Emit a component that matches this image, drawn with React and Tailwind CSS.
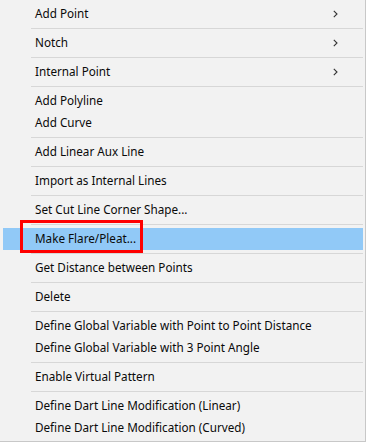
import React from 'react';

const groups = [
  [{ label: 'Add Point', sub: true }],
  [{ label: 'Notch', sub: true }],
  [{ label: 'Internal Point', sub: true }],
  [{ label: 'Add Polyline' }, { label: 'Add Curve' }],
  [{ label: 'Add Linear Aux Line' }],
  [{ label: 'Import as Internal Lines' }],
  [{ label: 'Set Cut Line Corner Shape...' }],
  [{ label: 'Make Flare/Pleat...', active: true }],
  [{ label: 'Get Distance between Points' }],
  [{ label: 'Delete' }],
  [
    { label: 'Define Global Variable with Point to Point Distance' },
    { label: 'Define Global Variable with 3 Point Angle' },
  ],
  [{ label: 'Enable Virtual Pattern' }],
  [
    { label: 'Define Dart Line Modification (Linear)' },
    { label: 'Define Dart Line Modification (Curved)' },
  ],
];

const Chevron = () => (
  <svg width="5" height="8" viewBox="0 0 5 8" className="absolute right-[25px] top-[7px]">
    <path d="M0.8 0.8 L4 4 L0.8 7.2" fill="none" stroke="#333" strokeWidth="1.1" />
  </svg>
);

const Item = ({ label, sub, active }) => (
  <div
    className={`relative flex items-center h-[22px] pl-[32px] text-[11.7px] text-[#0a0a0a] ${
      active ? 'bg-[#91c9f7]' : ''
    }`}
  >
    <span className="whitespace-nowrap leading-none">{label}</span>
    {sub && <Chevron />}
    {active && (
      <div className="absolute left-[17px] top-[-8px] w-[123px] h-[33px] border-[3px] border-[#ff0000]" />
    )}
  </div>
);

export default function App() {
  return (
    <div
      className="w-[366px] h-[442px] bg-[#f2f2f2] border-r border-b border-[#c8c8c8] pt-[3px] pl-[3px] pr-[2px] overflow-hidden"
      style={{ fontFamily: '"Noto Sans", "Noto Sans CJK KR", sans-serif' }}
    >
      {groups.map((items, gi) => (
        <React.Fragment key={gi}>
          {gi > 0 && <div className="my-[3px] ml-[28px] h-px bg-[#d7d7d7]" />}
          {items.map((it) => (
            <Item key={it.label} {...it} />
          ))}
        </React.Fragment>
      ))}
    </div>
  );
}
